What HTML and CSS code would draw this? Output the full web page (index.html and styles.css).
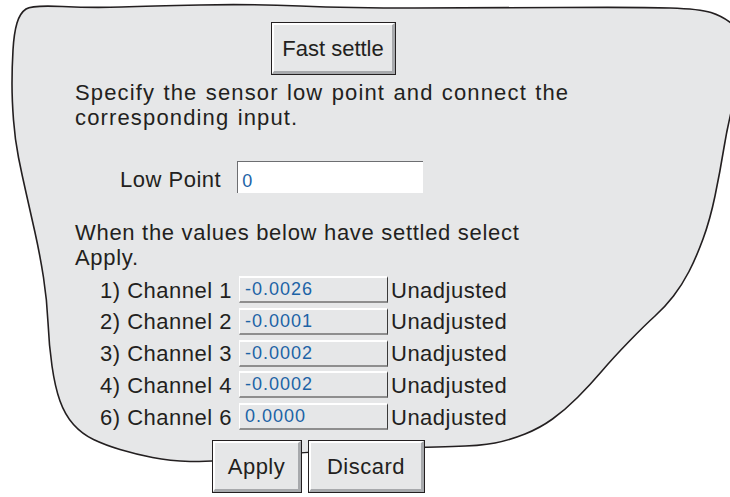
FILE: index.html
```html
<!DOCTYPE html>
<html lang="en">
<head>
  <meta charset="UTF-8" />
  <title>Sensor low point</title>
  <link rel="stylesheet" href="styles.css">
</head>
<body>

  <div class="screen">
    <!-- outline of the dialog -->
    <svg class="blob" width="730" height="497" viewBox="0 0 730 497">
      <path d="M26,9 Q20,13 17,23 Q14,33 13,50 Q12,67 12,83.5 Q12,100 13.5,120 Q15,140 18.5,157.5 Q22,175 26,192.5 Q30,210 35,232.5 Q40,255 43.5,277.5 Q47,300 48,322.5 Q49,345 52,366 Q55,387 60,401 Q65,415 73.5,424.5 Q82,434 93.5,439.5 Q105,445 120,449.5 Q135,454 152.5,457.5 Q170,461 190,461.5 Q210,462 255,457 Q300,452 362.5,449.5 Q425,447 452.5,446.5 Q480,446 495,443 Q510,440 525,434 Q540,428 552.5,419 Q565,410 577.5,397.5 Q590,385 601.5,371.5 Q613,358 629,341.5 Q645,325 655,316 Q665,307 673.5,296 Q682,285 689,271.5 Q696,258 703,239 Q710,220 715,196 Q720,172 724,147.5 Q728,123 735,96.5 Q742,70 741,50 Q740,30 731,23 Q722,16 711,12.5 Q700,9 670,8 Q640,7 560,7.5 Q480,8 415,8 Q350,8 300,6 Q250,4 200,5 Q150,6 121.5,7 Q93,8 62.5,6.5 Q32,5 26,9 Z" />
    </svg>

    <div class="panel">
      <div class="btn btn-settle"><span>Fast settle</span></div>

      <p class="msg msg-top">Specify the sensor low point and connect the<br>corresponding input.</p>

      <div class="field">
        <span class="field-label">Low Point</span>
        <span class="field-input">0</span>
      </div>

      <p class="msg msg-apply">When the values below have settled select<br>Apply.</p>

      <div class="channels">
        <div class="chan"><span class="chan-name">1) Channel 1</span><span class="chan-value">-0.0026</span><span class="chan-state">Unadjusted</span></div>
        <div class="chan"><span class="chan-name">2) Channel 2</span><span class="chan-value">-0.0001</span><span class="chan-state">Unadjusted</span></div>
        <div class="chan"><span class="chan-name">3) Channel 3</span><span class="chan-value">-0.0002</span><span class="chan-state">Unadjusted</span></div>
        <div class="chan"><span class="chan-name">4) Channel 4</span><span class="chan-value">-0.0002</span><span class="chan-state">Unadjusted</span></div>
        <div class="chan"><span class="chan-name">6) Channel 6</span><span class="chan-value">0.0000</span><span class="chan-state">Unadjusted</span></div>
      </div>

      <div class="actions">
        <div class="btn btn-apply"><span>Apply</span></div>
        <div class="btn btn-discard"><span>Discard</span></div>
      </div>
    </div>
  </div>

</body>
</html>
```

FILE: styles.css
```css
body {
  margin: 0;
  font-family: 'Liberation Sans', Arial, sans-serif;
  color: #231f20;
  background: #fff;
}

.screen {
  position: relative;
  width: 730px;
  height: 497px;
  overflow: hidden;
}

.blob {
  position: absolute;
  left: 0;
  top: 0;
}

.blob path {
  fill: #e6e7e8;
  stroke: #231f20;
  stroke-width: 1.6;
}

.panel {
  position: relative;
  padding: 22px 0 0 75px;
  font-size: 22px;
  letter-spacing: 0.5px;
}

/* bevelled buttons */
.btn {
  display: flex;
  height: 53px;
  box-sizing: border-box;
  border: 1px solid #231f20;
  background: #e6e7e8;
}

.btn span {
  flex: 1;
  display: flex;
  align-items: center;
  justify-content: center;
  line-height: 25px;
  border-style: solid;
  border-width: 2px 3px 3px 2px;
  border-color: #fff #a7a9ac #a7a9ac #fff;
}

.btn-settle {
  width: 125px;
  margin-left: 196px;
  letter-spacing: 0;
}

.btn-apply { width: 90px; }
.btn-discard { width: 117px; }

.msg {
  margin: 0;
  line-height: 25px;
  letter-spacing: 0.7px;
}

.msg-top {
  margin-top: 5px;
  letter-spacing: 1.15px;
  word-spacing: 1px;
}

.msg-apply { margin-top: 27px; }

.field {
  display: flex;
  align-items: baseline;
  margin-top: 31px;
}

.field-label {
  margin-left: 45px;
  line-height: 25px;
}

.field-input {
  width: 186px;
  height: 32px;
  box-sizing: border-box;
  margin-left: 16px;
  padding: 9px 0 0 4px;
  background: #fff;
  border-top: 1px solid #6d6e71;
  border-left: 1px solid #6d6e71;
  font-size: 18px;
  line-height: 20px;
  color: #1c63a6;
}

.channels {
  display: flex;
  flex-direction: column;
  gap: 4.75px;
  margin-top: 6px;
}

.chan {
  display: flex;
  align-items: center;
  height: 27px;
  line-height: 25px;
}

.chan-name {
  width: 139px;
  margin-left: 25px;
  padding-top: 1px;
}

.chan-value {
  width: 149px;
  height: 27px;
  box-sizing: border-box;
  padding-left: 5px;
  border-style: solid;
  border-width: 2px 1px 2px 1px;
  border-color: #fff #3a3a3a #8e8e8e #fff;
  font-size: 18px;
  line-height: 23px;
  letter-spacing: 1px;
  color: #1c63a6;
}

.chan-state {
  margin-left: 3px;
  padding-top: 1px;
}

.actions {
  display: flex;
  gap: 6px;
  margin: 10px 0 0 137px;
}
```
